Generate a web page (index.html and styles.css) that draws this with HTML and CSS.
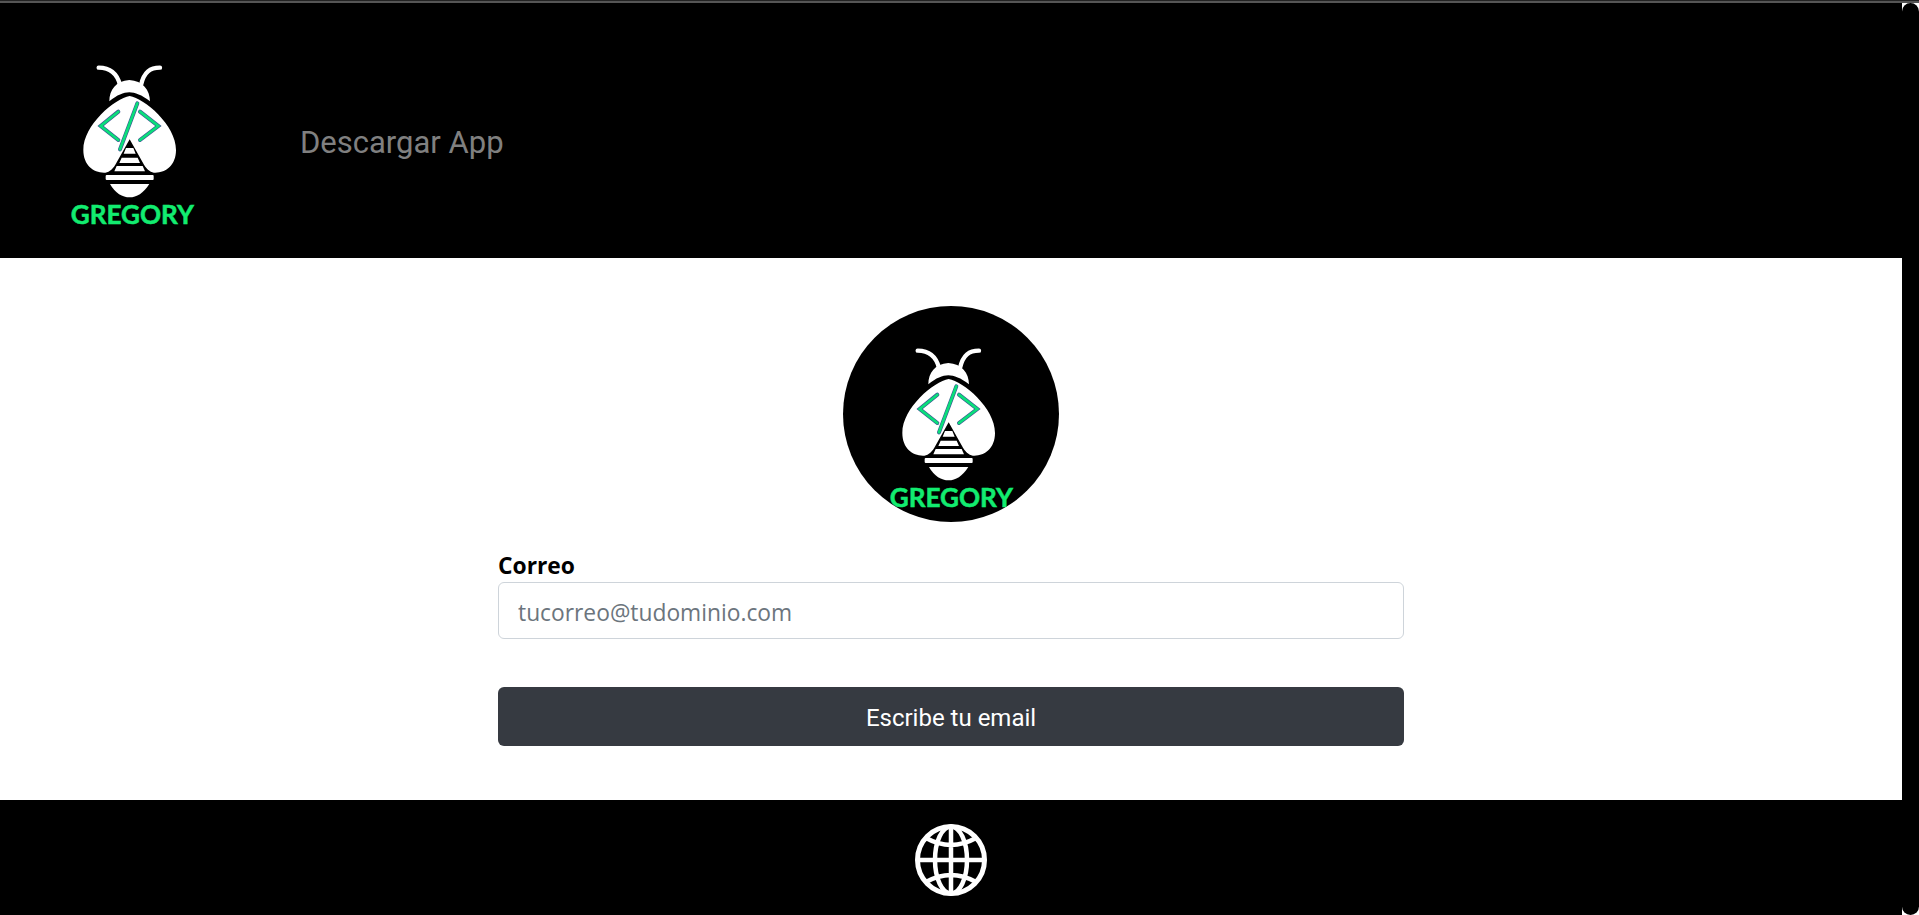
FILE: index.html
```html
<!DOCTYPE html>
<html lang="es">
<head>
    <meta charset="UTF-8">
    <meta name="viewport" content="width=device-width, initial-scale=1.0">
    <title>Gregory</title>
    <link rel="stylesheet" href="styles.css">
</head>
<body>
    <svg class="defs" width="0" height="0">
        <defs>
            <g id="bee">
                <!-- antennae -->
                <path d="M176 83 C205 83 230 95 240 135 M360 83 C331 83 312 95 303 135" fill="none" stroke="#fff" stroke-width="13" stroke-linecap="round"/>
                <!-- head -->
                <path d="M208 184 C208 150 228 122 268 120 C308 122 330 150 330 184 C305 165 285 157 268 157 C250 157 232 165 208 184Z" fill="#fff"/>
                <!-- wings -->
                <path d="M269 168 C225 175 130 255 130 330 C130 375 160 398 192 398 C204 398 216 390 226 374 L269 298 L312 374 C322 390 334 398 346 398 C378 398 408 375 408 330 C408 255 313 175 269 168Z" fill="#fff"/>
                <!-- body stripes -->
                <path d="M258 324 H280 L287 341 H251Z M245 353 H293 L300 369 H238Z M230 378 H308 L315 394 H223Z" fill="#fff"/>
                <rect x="197" y="405" width="144" height="15" rx="3" fill="#fff"/>
                <path d="M210 432 H328 C310 460 290 472 269 472 C247 472 226 460 210 432Z" fill="#fff"/>
                <!-- code mark -->
                <path d="M235 215 L182 258 L235 300 M300 215 L355 258 L300 300 M292 190 L240 328" fill="none" stroke="#3d5a94" stroke-width="12" stroke-linecap="round"/>
                <path d="M235 215 L182 258 L235 300 M300 215 L355 258 L300 300 M292 190 L240 328" fill="none" stroke="#0adf7a" stroke-width="8" stroke-linecap="round"/>
            </g>
        </defs>
    </svg>

    <div class="top-strip"></div>
    <div class="window">
        <div class="page">
            <header class="site-header">
                <svg class="logo" viewBox="0 0 540 600">
                    <use href="#bee"/>
                    <text class="logo-text" x="92" y="552" textLength="370" lengthAdjust="spacingAndGlyphs">GREGORY</text>
                </svg>
                <a class="nav-link" href="#">Descargar App</a>
            </header>

            <main class="site-main">
                <div class="avatar">
                    <svg class="logo" viewBox="0 0 540 600">
                        <use href="#bee"/>
                        <text class="logo-text" x="92" y="552" textLength="370" lengthAdjust="spacingAndGlyphs">GREGORY</text>
                    </svg>
                </div>
                <form class="mail-form">
                    <label class="mail-label" for="correo">Correo</label>
                    <input class="mail-input" type="text" id="correo" placeholder="tucorreo@tudominio.com">
                    <button class="mail-btn" type="button">Escribe tu email</button>
                </form>
            </main>

            <footer class="site-footer">
                <svg class="globe" viewBox="0 0 72 72" fill="none" stroke="#fff" stroke-width="4.5">
                    <circle cx="36" cy="36" r="33.5" stroke-width="5"/>
                    <ellipse cx="36" cy="36" rx="16" ry="33.5"/>
                    <path d="M36 3 V69 M3 36 H69 M11 14 Q36 28 61 14 M11 58 Q36 44 61 58"/>
                </svg>
            </footer>
        </div>
        <div class="scroll-track"><div class="scroll-thumb"></div></div>
    </div>
</body>
</html>
```

FILE: styles.css
```css
* {
    box-sizing: border-box;
}
html, body {
    height: 100%;
}
body {
    margin: 0;
    display: flex;
    flex-direction: column;
    background-color: #fff;
    overflow: hidden;
}
.defs {
    position: absolute;
}
.top-strip {
    height: 3px;
    flex: none;
    background-color: #555;
    border-top: 1px solid #222;
}
.window {
    flex: 1;
    display: flex;
    min-height: 0;
}
.page {
    flex: 1;
    display: flex;
    flex-direction: column;
}
.scroll-track {
    width: 17px;
    flex: none;
    background-color: #fff;
}
.scroll-thumb {
    height: 100%;
    background-color: #000;
    border-radius: 8.5px;
}

/* header */
.site-header {
    height: 255px;
    flex: none;
    display: flex;
    align-items: center;
    padding: 19px 0 0 40px;
    background-color: #000;
}
.logo {
    display: block;
    width: 180px;
    height: 200px;
    flex: none;
}
.logo-text {
    font-family: "Lato", sans-serif;
    font-weight: 700;
    font-size: 80px;
    fill: #12ec70;
    stroke: #12ec70;
    stroke-width: 1.5px;
}
.nav-link {
    margin: 4px 0 0 80px;
    font-family: "Roboto", sans-serif;
    font-size: 31px;
    color: #808080;
    text-decoration: none;
}

/* form area */
.site-main {
    flex: 1;
    display: flex;
    flex-direction: column;
    align-items: center;
    padding-top: 48px;
}
.avatar {
    width: 216px;
    height: 216px;
    display: flex;
    padding: 17px 0 0 16px;
    border-radius: 50%;
    background-color: #000;
    overflow: hidden;
}
.mail-form {
    width: 906px;
    margin-top: 29px;
    display: flex;
    flex-direction: column;
}
.mail-label {
    font-family: "Open Sans", sans-serif;
    font-weight: 700;
    font-size: 22.8px;
    line-height: 30px;
    margin-bottom: 1px;
    color: #000;
}
.mail-input {
    height: 57px;
    padding: 4px 19px 0;
    border: 1px solid #ced4da;
    border-radius: 6px;
    font-family: "Open Sans", sans-serif;
    font-size: 22.8px;
    color: #495057;
    outline: none;
}
.mail-input::placeholder {
    color: #6c757d;
    opacity: 1;
}
.mail-btn {
    height: 59px;
    margin-top: 48px;
    padding: 2px 0 0;
    border: none;
    border-radius: 6px;
    background-color: #363a41;
    color: #fff;
    font-family: "Roboto", sans-serif;
    font-size: 24px;
    cursor: pointer;
}

/* footer */
.site-footer {
    height: 115px;
    flex: none;
    display: flex;
    align-items: center;
    justify-content: center;
    padding-top: 4px;
    background-color: #000;
}
.globe {
    width: 72px;
    height: 72px;
    display: block;
}
```
